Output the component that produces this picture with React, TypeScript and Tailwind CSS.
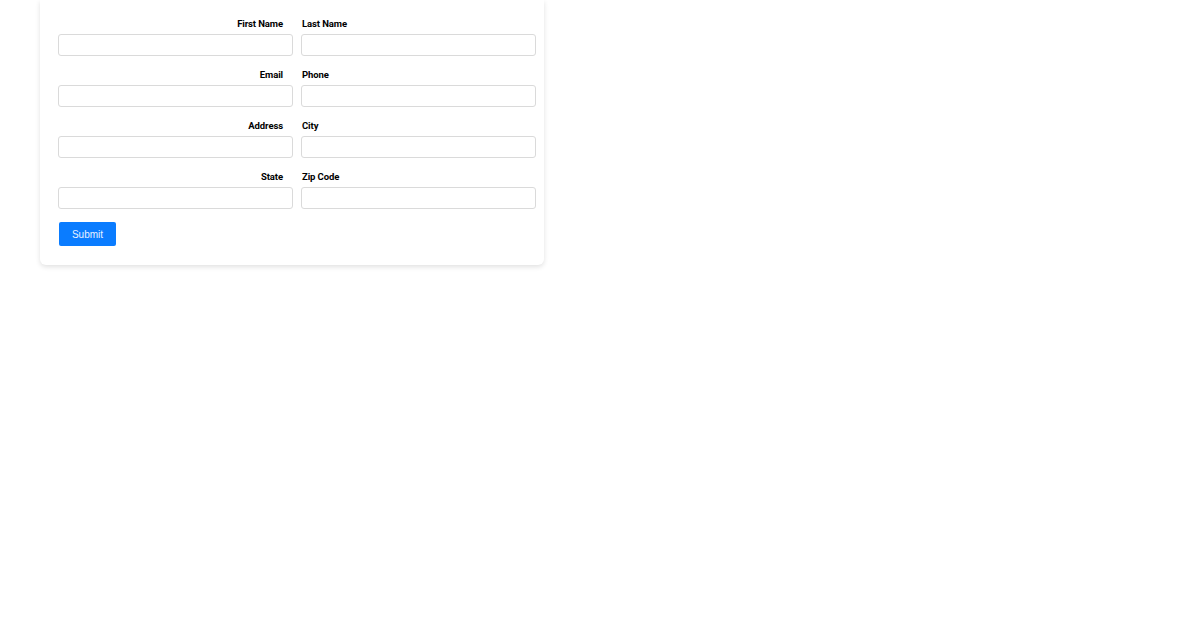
import React from "react";

const rows = [
    ["First Name", "Last Name"],
    ["Email", "Phone"],
    ["Address", "City"],
    ["State", "Zip Code"],
];

export default function App() {
    return (
        <div className="min-h-screen bg-white font-['Roboto',sans-serif]">
            <div className="ml-[40px] w-[504px] rounded-b-md bg-white pl-[18px] pr-[8px] pt-[18px] pb-[19px] shadow-[0_2px_5px_rgba(0,0,0,0.12)]">
                {/* Fields */}
                <div className="grid grid-cols-2 gap-x-2 gap-y-[13px]">
                    {rows.map(([left, right]) => (
                        <React.Fragment key={left}>
                            <div className="flex flex-col">
                                <label className="mb-[4px] block pr-[10px] text-right text-[9.5px] font-bold leading-[12px] tracking-[-0.1px] text-black">
                                    {left}
                                </label>
                                <input className="h-[22px] w-full rounded-[3px] border border-[#dadada] bg-white px-2 text-[11px] outline-none" />
                            </div>
                            <div className="flex flex-col">
                                <label className="mb-[4px] block pl-[1px] text-[9.5px] font-bold leading-[12px] tracking-[-0.1px] text-black">
                                    {right}
                                </label>
                                <input className="h-[22px] w-full rounded-[3px] border border-[#dadada] bg-white px-2 text-[11px] outline-none" />
                            </div>
                        </React.Fragment>
                    ))}
                </div>

                {/* Submit */}
                <button className="ml-[1px] mt-[13px] h-[24px] w-[57px] rounded-[2px] bg-[#0a7cff] font-['Liberation_Sans',sans-serif] text-[10px] text-[#e8f1ff]">
                    Submit
                </button>
            </div>
        </div>
    );
}
